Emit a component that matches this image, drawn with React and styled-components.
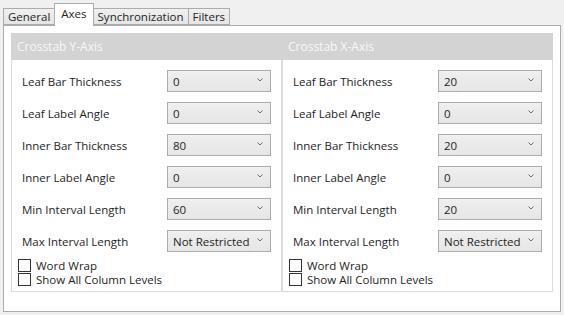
import React from "react";
import styled, { createGlobalStyle } from "styled-components";

const GlobalStyle = createGlobalStyle`
  html, body {
    margin: 0;
    padding: 0;
    background: #f0f0f0;
  }
  body {
    font-family: "Open Sans", "Noto Sans", sans-serif;
    font-size: 11.5px;
    color: #1e1e1e;
  }
`;

const yAxis = [
  { label: "Leaf Bar Thickness", value: "0" },
  { label: "Leaf Label Angle", value: "0" },
  { label: "Inner Bar Thickness", value: "80" },
  { label: "Inner Label Angle", value: "0" },
  { label: "Min Interval Length", value: "60" },
  { label: "Max Interval Length", value: "Not Restricted" },
];

const xAxis = [
  { label: "Leaf Bar Thickness", value: "20" },
  { label: "Leaf Label Angle", value: "0" },
  { label: "Inner Bar Thickness", value: "20" },
  { label: "Inner Label Angle", value: "0" },
  { label: "Min Interval Length", value: "20" },
  { label: "Max Interval Length", value: "Not Restricted" },
];

function Chevron() {
  return (
    <svg width="6" height="4" viewBox="0 0 6 4">
      <polyline points="0.5,0.5 3,3 5.5,0.5" fill="none" stroke="#6a6a6a" strokeWidth="1" />
    </svg>
  );
}

function AxisGroup({ title, rows }) {
  return (
    <Group>
      <GroupHeader>{title}</GroupHeader>
      <Rows>
        {rows.map((r) => (
          <Row key={r.label}>
            <Label>{r.label}</Label>
            <Select>
              <span>{r.value}</span>
              <Chevron />
            </Select>
          </Row>
        ))}
      </Rows>
      <Checks>
        <CheckRow>
          <Box />
          <span>Word Wrap</span>
        </CheckRow>
        <CheckRow>
          <Box />
          <span>Show All Column Levels</span>
        </CheckRow>
      </Checks>
    </Group>
  );
}

export default function App() {
  const tabs = ["General", "Axes", "Synchronization", "Filters"];
  return (
    <Page>
      <GlobalStyle />
      <TabStrip>
        {tabs.map((t) => (
          <Tab key={t} active={t === "Axes"}>
            {t}
          </Tab>
        ))}
      </TabStrip>
      <Panel>
        <AxisGroup title="Crosstab Y-Axis" rows={yAxis} />
        <AxisGroup title="Crosstab X-Axis" rows={xAxis} />
      </Panel>
    </Page>
  );
}

const Page = styled.div`
  width: 564px;
  height: 315px;
  padding: 3px 0 0 3px;
  box-sizing: border-box;
  background: #f0f0f0;
`;

const TabStrip = styled.div`
  display: flex;
  align-items: flex-end;
  height: 22px;
  padding-left: 1px;
  position: relative;
  z-index: 1;
`;

const Tab = styled.div.withConfig({ shouldForwardProp: (p) => p !== "active" })`
  box-sizing: border-box;
  display: flex;
  align-items: center;
  height: ${({ active }) => (active ? "23px" : "17px")};
  margin-bottom: ${({ active }) => (active ? "-1px" : "0")};
  padding: 0 ${({ active }) => (active ? "6px" : "4px")} ${({ active }) => (active ? "4px" : "0")};
  border: 1px solid #acacac;
  border-bottom: ${({ active }) => (active ? "none" : "1px solid #acacac")};
  margin-left: -1px;
  background: ${({ active }) =>
    active ? "#ffffff" : "linear-gradient(#f0f0f0, #e5e5e5)"};
  color: #1e1e1e;
  white-space: nowrap;
`;

const Panel = styled.div`
  box-sizing: border-box;
  width: 558px;
  height: 287px;
  border: 1px solid #acacac;
  background: #ffffff;
  padding: 7px 7px 0 7px;
  display: grid;
  grid-template-columns: 271px 271px;
  align-items: start;
`;

const Group = styled.div`
  box-sizing: border-box;
  height: 259px;
  border: 1px solid #dcdcdc;
  border-top: none;
  display: flex;
  flex-direction: column;
`;

const GroupHeader = styled.div`
  height: 27px;
  background: #d3d3d3;
  color: #f7f7f7;
  font-size: 12px;
  display: flex;
  align-items: center;
  padding-left: 6px;
  margin: 0 -1px;
`;

const Rows = styled.div`
  display: flex;
  flex-direction: column;
  gap: 10px;
  padding: 10px 0 0 10px;
`;

const Row = styled.div`
  display: flex;
  align-items: center;
  height: 22px;
`;

const Label = styled.div`
  width: 145px;
`;

const Select = styled.div`
  box-sizing: border-box;
  width: 104px;
  height: 22px;
  border: 1px solid #acacac;
  background: linear-gradient(#efefef, #e6e6e6);
  display: flex;
  align-items: center;
  justify-content: space-between;
  padding: 0 7px 0 5px;
  svg {
    margin-bottom: 3px;
  }
`;

const Checks = styled.div`
  display: flex;
  flex-direction: column;
  padding: 6px 0 0 6px;
`;

const CheckRow = styled.div`
  display: flex;
  align-items: center;
  gap: 5px;
  height: 14px;
`;

const Box = styled.span`
  box-sizing: border-box;
  width: 13px;
  height: 13px;
  border: 1px solid #333333;
  background: #ffffff;
`;
